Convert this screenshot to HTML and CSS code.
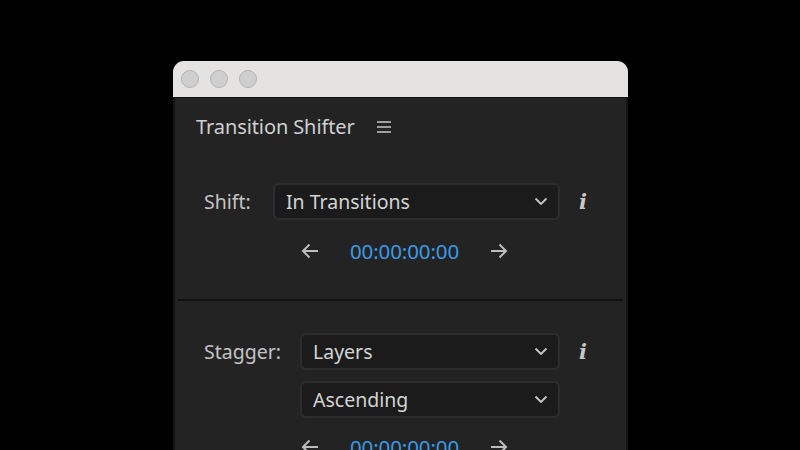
FILE: index.html
```html
<!DOCTYPE html>
<html>
<head>
<meta charset="utf-8">
<link rel="stylesheet" href="styles.css">
</head>
<body>
<div class="window">
  <div class="titlebar">
    <span class="light"></span><span class="light"></span><span class="light"></span>
  </div>
  <div class="panel">
    <div class="header">
      <span class="title">Transition Shifter</span>
      <svg class="menu" width="14" height="12" viewBox="0 0 14 12"><path d="M0 1h14M0 6h14M0 11h14" stroke="#c8c8c8" stroke-width="1.6"/></svg>
    </div>
    <div class="section shift">
      <div class="row">
        <span class="label">Shift:</span>
        <div class="select wide1"><span>In Transitions</span>
          <svg class="chev" width="14" height="9" viewBox="0 0 14 9"><path d="M1.5 1.5l5.5 5.5 5.5-5.5" fill="none" stroke="#c8c8c8" stroke-width="1.8"/></svg>
        </div>
        <span class="info">i</span>
      </div>
      <div class="time">
        <svg class="arrow" width="18" height="16" viewBox="0 0 18 16"><path d="M17 8H2M8.5 1.5L2 8l6.5 6.5" fill="none" stroke="#bdbdbd" stroke-width="2"/></svg>
        <span class="tc">00:00:00:00</span>
        <svg class="arrow" width="18" height="16" viewBox="0 0 18 16"><path d="M1 8h15M9.5 1.5L16 8l-6.5 6.5" fill="none" stroke="#bdbdbd" stroke-width="2"/></svg>
      </div>
    </div>
    <div class="divider"></div>
    <div class="section stagger">
      <div class="row">
        <span class="label">Stagger:</span>
        <div class="select wide2"><span>Layers</span>
          <svg class="chev" width="14" height="9" viewBox="0 0 14 9"><path d="M1.5 1.5l5.5 5.5 5.5-5.5" fill="none" stroke="#c8c8c8" stroke-width="1.8"/></svg>
        </div>
        <span class="info">i</span>
      </div>
      <div class="row second">
        <div class="select wide2"><span>Ascending</span>
          <svg class="chev" width="14" height="9" viewBox="0 0 14 9"><path d="M1.5 1.5l5.5 5.5 5.5-5.5" fill="none" stroke="#c8c8c8" stroke-width="1.8"/></svg>
        </div>
      </div>
      <div class="time">
        <svg class="arrow" width="18" height="16" viewBox="0 0 18 16"><path d="M17 8H2M8.5 1.5L2 8l6.5 6.5" fill="none" stroke="#bdbdbd" stroke-width="2"/></svg>
        <span class="tc">00:00:00:00</span>
        <svg class="arrow" width="18" height="16" viewBox="0 0 18 16"><path d="M1 8h15M9.5 1.5L16 8l-6.5 6.5" fill="none" stroke="#bdbdbd" stroke-width="2"/></svg>
      </div>
    </div>
  </div>
</div>
</body>
</html>
```
FILE: styles.css
```css
html, body {
  margin: 0;
  padding: 0;
  background: #000;
  overflow: hidden;
  height: 450px;
}
body {
  padding: 61px 0 0 173px;
  box-sizing: border-box;
  font-family: "Noto Sans", "Open Sans", sans-serif;
}
.window {
  width: 455px;
  height: 400px;
  border-radius: 11px 11px 0 0;
  overflow: hidden;
  display: flex;
  flex-direction: column;
}
.titlebar {
  height: 37px;
  background: #e4e3e1;
  border-bottom: 1px solid #111;
  display: flex;
  align-items: center;
  gap: 11px;
  padding-left: 8px;
  box-sizing: border-box;
  flex: none;
}
.light {
  width: 16px;
  height: 16px;
  border-radius: 50%;
  background: #cfcfcf;
  border: 1px solid #b3b3b3;
}
.panel {
  flex: 1;
  background: #232323;
  border-left: 2px solid #141414;
  border-right: 2px solid #141414;
  display: flex;
  flex-direction: column;
}
.header {
  display: flex;
  align-items: center;
  height: 56px;
  padding-left: 21px;
  gap: 22px;
  flex: none;
}
.title {
  color: #d0d0d0;
  font-size: 20px;
  letter-spacing: -0.1px;
}
.menu { margin-top: 2px; }
.section {
  display: flex;
  flex-direction: column;
  flex: none;
}
.shift { padding-top: 29px; height: 145px; box-sizing: border-box; }
.row {
  display: flex;
  align-items: center;
  height: 37px;
  padding-left: 29px;
}
.label {
  color: #c4c4c4;
  font-size: 19.5px;
}
.shift .label { width: 69px; }
.stagger .label { width: 96px; }
.select {
  height: 37px;
  box-sizing: border-box;
  background: #1b1b1b;
  border: 2px solid #2d2d2d;
  border-radius: 6px;
  display: flex;
  align-items: center;
  justify-content: space-between;
  padding: 0 10px 0 11px;
  color: #d4d4d4;
  font-size: 19.5px;
}
.wide1 { width: 287px; }
.wide2 { width: 260px; }
.info {
  font-family: "DejaVu Serif", serif;
  font-style: italic;
  font-weight: bold;
  color: #c8c8c8;
  font-size: 21px;
  margin-left: 19px;
}
.time {
  display: flex;
  align-items: center;
  justify-content: center;
  gap: 31px;
  height: 26px;
  margin-top: 18px;
  padding-left: 8px;
}
.tc {
  color: #3c9ae6;
  font-size: 20.5px;
  letter-spacing: -0.1px;
}
.divider {
  height: 2px;
  background: #121212;
  margin: 0 3px;
  flex: none;
}
.stagger { padding-top: 32px; }
.stagger .row.second { padding-left: 125px; margin-top: 11px; }
.stagger .time { margin-top: 16px; }
```
